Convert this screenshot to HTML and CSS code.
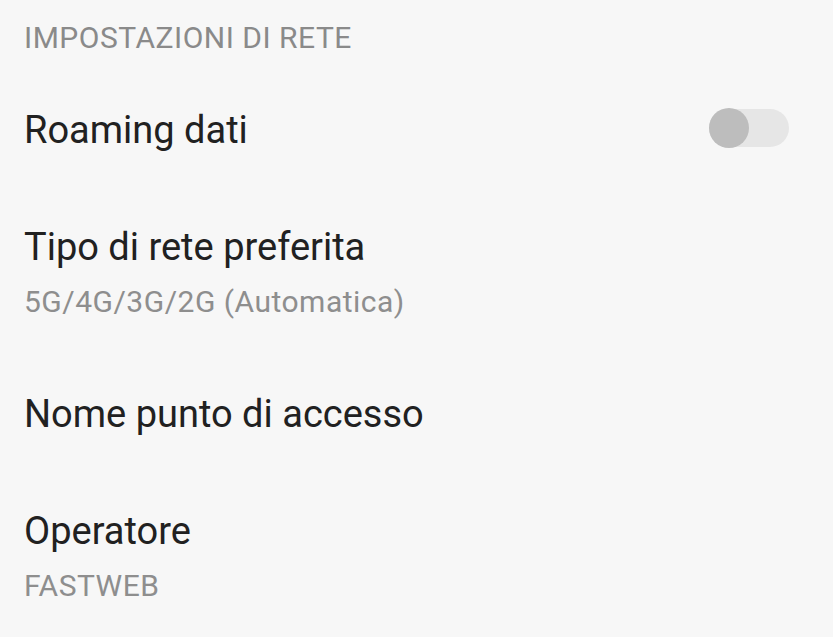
FILE: index.html
```html
<!DOCTYPE html>
<html lang="it">
<head>
<meta charset="utf-8">
<title>Impostazioni di rete</title>
<link rel="stylesheet" href="styles.css">
</head>
<body>
<main class="screen">
  <h2 class="section-title">IMPOSTAZIONI DI RETE</h2>
  <div class="item">
    <div class="item-text">
      <div class="item-title">Roaming dati</div>
    </div>
    <div class="switch" role="switch" aria-checked="false"><span class="switch-thumb"></span></div>
  </div>
  <div class="item">
    <div class="item-text">
      <div class="item-title">Tipo di rete preferita</div>
      <div class="item-sub">5G/4G/3G/2G (Automatica)</div>
    </div>
  </div>
  <div class="item">
    <div class="item-text">
      <div class="item-title">Nome punto di accesso</div>
    </div>
  </div>
  <div class="item">
    <div class="item-text">
      <div class="item-title">Operatore</div>
      <div class="item-sub">FASTWEB</div>
    </div>
  </div>
</main>
</body>
</html>
```
FILE: styles.css
```css
html, body {
  margin: 0;
  padding: 0;
  background: #f7f7f7;
}
body {
  font-family: Roboto, "Noto Sans", sans-serif;
  width: 833px;
  height: 637px;
  overflow: hidden;
}
.screen {
  display: flex;
  flex-direction: column;
  padding: 0 24px;
}
.section-title {
  margin: 0;
  padding-top: 20px;
  padding-bottom: 16px;
  font-size: 30px;
  font-weight: 400;
  line-height: 36px;
  letter-spacing: 0.5px;
  color: #8a8a8a;
}
.item {
  display: flex;
  align-items: center;
  justify-content: space-between;
  padding: 35px 0 36px;
}
.item-title {
  font-size: 38px;
  line-height: 46px;
  color: #212121;
}
.item-sub {
  margin-top: 14px;
  font-size: 30px;
  line-height: 36px;
  letter-spacing: 0.5px;
  color: #8e8e8e;
}
.switch {
  position: relative;
  width: 80px;
  height: 38px;
  margin: 0 20px 4px 0;
  border-radius: 19px;
  background: #e6e6e6;
}
.switch-thumb {
  position: absolute;
  left: 0;
  top: -1px;
  width: 40px;
  height: 40px;
  border-radius: 50%;
  background: #bdbdbd;
}
```
